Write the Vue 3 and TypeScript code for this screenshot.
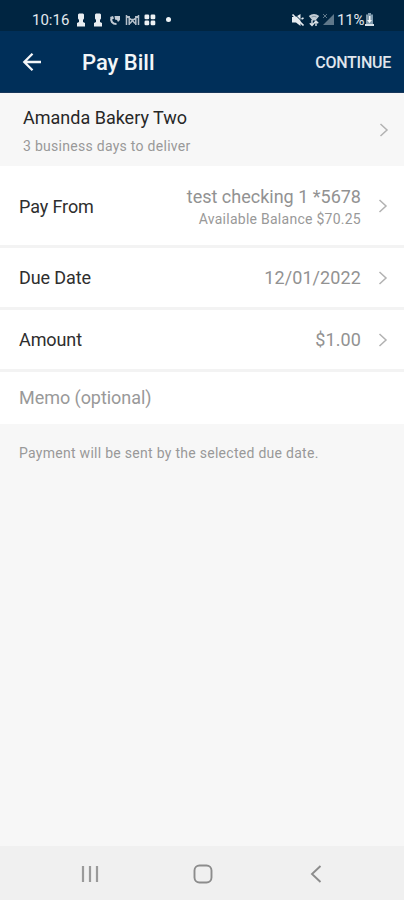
<script setup lang="ts">
interface DetailRow {
  id: string
  label: string
  value: string
  note?: string
}

const rows: DetailRow[] = [
  { id: 'from', label: 'Pay From', value: 'test checking 1 *5678', note: 'Available Balance $70.25' },
  { id: 'due', label: 'Due Date', value: '12/01/2022' },
  { id: 'amount', label: 'Amount', value: '$1.00' },
]
</script>

<template>
  <div class="screen">
    <div class="status">
      <span class="time">10:16</span>
      <svg class="pawn" viewBox="0 0 10 14" width="10" height="14">
        <path d="M3 .5h4l1 1v4L7 7v2l2 1v3.500H1V10l2-1V7L2 5.500v-4z" fill="#e9eef2" />
      </svg>
      <svg class="pawn second" viewBox="0 0 10 14" width="10" height="14">
        <path d="M3 .5h4l1 1v4L7 7v2l2 1v3.500H1V10l2-1V7L2 5.500v-4z" fill="#e9eef2" />
      </svg>
      <svg class="call" viewBox="0 0 12 14" width="12" height="14">
        <path d="M2.500 4.500C1.200 8 3.500 11 7.500 11" fill="none" stroke="#c3ccd5" stroke-width="2.100" />
        <path d="M1 4l3-1 1 2.500-2 1zM5.500 3H11v4L9 9 8 7 6 6.500z" fill="#c3ccd5" />
      </svg>
      <svg class="gate" viewBox="0 0 15 12" width="15" height="12">
        <path d="M1.500 1v10M4.200 2v9M10.800 2v9M13.500 1v10M1.500 1.500l4.500 4h3l4.500-4M5 9.500L7 7h1l2 2.500" fill="none" stroke="#b5c0ca" stroke-width="1.500" />
      </svg>
      <svg class="quad" viewBox="0 0 12 12" width="12" height="12">
        <g fill="#edf1f4">
          <rect x=".5" y=".5" width="4.700" height="4.700" rx="1.300" />
          <rect x="6.600" y=".5" width="4.700" height="4.700" rx="1.300" />
          <rect x=".5" y="6.600" width="4.700" height="4.700" rx="1.300" />
          <rect x="6.600" y="6.600" width="4.700" height="4.700" rx="1.300" />
        </g>
      </svg>
      <i class="dot"></i>
      <div class="signals">
        <svg viewBox="0 0 14 14" width="14" height="14">
          <path d="M1 4h3.500L9.500 1v12L5 9.500H1z" fill="#e7edf1" />
          <path d="M3 .5l10.500 10.500" stroke="#002541" stroke-width="1" />
          <path d="M1.500 1.500l11 11M10.500 6l2-1" stroke="#e7edf1" stroke-width="1.700" />
        </svg>
        <svg class="wifi" viewBox="0 0 12 14" width="12" height="14">
          <path d="M.8 3Q6-.8 11.200 3L7.500 7.500h-3z" fill="#c3cdd5" />
          <path d="M3.500 4Q6 2.500 8.500 4" fill="none" stroke="#6f8596" stroke-width=".8" />
          <path d="M4 7v5M1.800 10.300L4 12.500l2-2.200M8 13V8M6 10.200L8 8l2.200 2.200" fill="none" stroke="#dce3e8" stroke-width="1.400" />
        </svg>
        <svg class="cell" viewBox="0 0 13 13" width="13" height="13">
          <path d="M12 1v11H1z" fill="#5f788a" />
          <path d="M1 1l4 4M5 1L1 5" stroke="#5f788a" />
        </svg>
        <span class="percent">11%</span>
        <svg class="battery" viewBox="0 0 9 13" width="9" height="13">
          <path d="M3 0h3v1.500h2V12H1V1.500h2z" fill="#7f9bae" />
          <path d="M4 3h1.500v4H7L4.500 10 2 7h2z" fill="#f1f6f8" />
          <path d="M0 11h9v2H0z" fill="#d7e1e8" />
        </svg>
      </div>
    </div>

    <header class="bar">
      <svg class="back" viewBox="0 0 20 20" width="20" height="20">
        <path d="M19 10H2.500M10.500 1.800L2.300 10l8.200 8.200" fill="none" stroke="#f4f6f8" stroke-width="2.300" />
      </svg>
      <h1>Pay Bill</h1>
      <button type="button">CONTINUE</button>
    </header>

    <main>
      <section class="payee">
        <div class="summary">
          <div class="name">Amanda Bakery Two</div>
          <div class="delivery">3 business days to deliver</div>
        </div>
        <svg class="chevron" viewBox="0 0 10 16" width="10" height="16">
          <path d="M1.500 2L8 8l-6.500 6" />
        </svg>
      </section>

      <section v-for="row in rows" :key="row.id" class="row" :class="row.id">
        <span class="label">{{ row.label }}</span>
        <div class="data">
          <div class="value">{{ row.value }}</div>
          <div v-if="row.note" class="note">{{ row.note }}</div>
        </div>
        <svg class="chevron" viewBox="0 0 10 16" width="10" height="16">
          <path d="M1.500 2L8 8l-6.500 6" />
        </svg>
      </section>

      <section class="memo"><span>Memo (optional)</span></section>
      <p>Payment will be sent by the selected due date.</p>
    </main>

    <nav>
      <svg class="recents" viewBox="0 0 20 20" width="20" height="20">
        <path d="M3 2v16M10 2v16M17 2v16" />
      </svg>
      <svg viewBox="0 0 20 20" width="20" height="20">
        <rect x="1.500" y="1.500" width="17" height="17" rx="5" />
      </svg>
      <svg viewBox="0 0 20 20" width="20" height="20">
        <path d="M14.500 2L6 10l8.500 8" />
      </svg>
    </nav>
  </div>
</template>

<style>
body {
  margin: 0;
}
</style>

<style scoped>
.screen {
  box-sizing: border-box;
  display: flex;
  flex-direction: column;
  width: 404px;
  height: 900px;
  background: #f7f7f7;
  font-family: Roboto, sans-serif;
  overflow: hidden;
}
svg {
  display: block;
  flex: none;
}
.status {
  display: flex;
  align-items: center;
  box-sizing: border-box;
  height: 31px;
  padding: 8px 30px 0 32px;
  color: #e3e9ee;
  background: #002541;
}
.time {
  width: 38px;
  font-size: 15px;
  line-height: 20px;
}
.pawn {
  margin-left: 6px;
}
.second {
  margin-left: 7px;
}
.call {
  margin-left: 6px;
}
.gate {
  margin-left: 4px;
}
.quad {
  margin-left: 4px;
}
.dot {
  width: 5px;
  height: 5px;
  margin-left: 10px;
  border-radius: 50%;
  background: #eef3f6;
}
.signals {
  display: flex;
  align-items: center;
  margin-left: auto;
}
.signals > svg:first-child {
  margin-right: -1px;
}
.wifi {
  margin-left: 4px;
}
.cell {
  margin-left: 2px;
}
.percent {
  width: 28px;
  margin-left: 2px;
  font-size: 15px;
  line-height: 20px;
  letter-spacing: -0.2px;
}
.battery {
  margin-left: 0;
}
.bar {
  display: flex;
  align-items: center;
  box-sizing: border-box;
  height: 62px;
  padding: 0 13px 0 22px;
  color: #f3f6f8;
  background: #002f59;
  border-bottom: 1px solid #17375b;
}
h1 {
  margin: 2px 0 0 40px;
  font-size: 22px;
  font-weight: 500;
  line-height: 28px;
}
button {
  margin: 3px 0 0 auto;
  padding: 0;
  border: 0;
  color: #e0e6ed;
  background: none;
  font: 500 16px/24px Roboto, sans-serif;
  letter-spacing: -0.25px;
}
main {
  flex: 1;
}
section {
  display: flex;
  align-items: center;
  box-sizing: border-box;
}
.payee {
  justify-content: space-between;
  height: 73px;
  padding: 0 15px 0 23px;
}
.summary {
  padding-top: 3px;
}
.name {
  color: #272727;
  font-size: 18px;
  line-height: 26px;
}
.delivery {
  margin-top: 3px;
  color: #999;
  font-size: 14px;
  line-height: 24px;
  letter-spacing: 0.28px;
}
.chevron {
  fill: none;
  stroke: #b2b2b2;
  stroke-width: 1.5;
}
.row {
  height: 62px;
  padding: 0 16px 0 19px;
  border-bottom: 3px solid #f3f3f3;
  background: #fff;
}
.from {
  height: 82px;
}
.label {
  padding-top: 1px;
  color: #2e2e2e;
  font-size: 18px;
  line-height: 26px;
  letter-spacing: -0.1px;
}
.from .label {
  padding-top: 2px;
}
.data {
  margin-left: auto;
  margin-right: 17px;
  padding-top: 1px;
  text-align: right;
}
.value {
  color: #929292;
  font-size: 18px;
  line-height: 22px;
  letter-spacing: 0.1px;
}
.from .data {
  padding-top: 3px;
}
.from .value {
  letter-spacing: 0;
}
.note {
  margin-top: 1px;
  color: #999;
  font-size: 14px;
  line-height: 20px;
  letter-spacing: 0.26px;
}
.memo {
  height: 52px;
  padding-left: 19px;
  padding-bottom: 1px;
  color: #999;
  background: #fff;
  font-size: 18px;
  letter-spacing: -0.05px;
}
p {
  margin: 18px 0 0 19px;
  color: #999;
  font-size: 14px;
  line-height: 22px;
  letter-spacing: 0.28px;
}
nav {
  display: flex;
  align-items: center;
  justify-content: space-between;
  box-sizing: border-box;
  height: 54px;
  padding: 2px 78px 0 80px;
  background: #f0f0f0;
}
nav svg {
  fill: none;
  stroke: #8c8c8c;
  stroke-width: 1.9;
}
nav .recents {
  stroke: #9a9a9a;
  stroke-width: 2.2;
}
</style>
